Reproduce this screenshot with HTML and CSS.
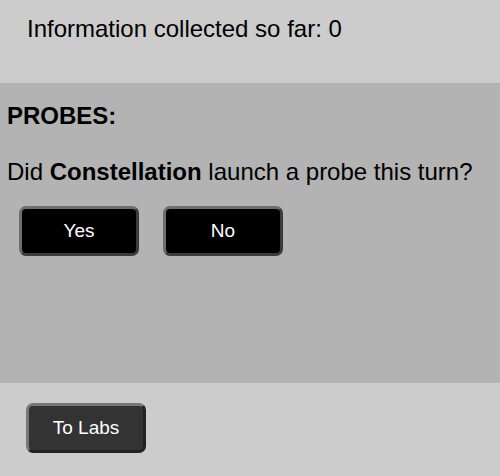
FILE: index.html
```html
<!DOCTYPE html>
<html>
<head>
<meta charset="utf-8">
<link rel="stylesheet" href="styles.css">
</head>
<body>
<div class="top">Information collected so far: 0</div>
<div class="probes">
  <div class="title">PROBES:</div>
  <div class="question">Did <b>Constellation</b> launch a probe this turn?</div>
  <div class="choices">
    <button class="btn black">Yes</button>
    <button class="btn black">No</button>
  </div>
</div>
<div class="bottom">
  <button class="btn dark">To Labs</button>
</div>
</body>
</html>
```
FILE: styles.css
```css
html, body {
  margin: 0;
  padding: 0;
  background: #cccccc;
  font-family: "Liberation Sans", Arial, sans-serif;
  color: #000;
}
.top {
  height: 83px;
  box-sizing: border-box;
  padding: 15px 27px 0;
  font-size: 24px;
  line-height: 28px;
  background: #cccccc;
}
.probes {
  height: 300px;
  box-sizing: border-box;
  background: #b3b3b3;
  padding: 19px 7px 0;
  font-size: 24px;
  line-height: 28px;
}
.title {
  font-weight: bold;
}
.question {
  margin-top: 28px;
}
.choices {
  display: flex;
  gap: 24px;
  margin-top: 20px;
  padding-left: 12px;
}
.btn {
  width: 120px;
  height: 50px;
  box-sizing: border-box;
  border-radius: 7px;
  border-style: solid;
  border-width: 3px;
  font-family: "Liberation Sans", Arial, sans-serif;
  font-size: 19px;
  color: #fff;
  padding: 0;
  margin: 0;
}
.black {
  background: #000;
  border-color: #6e6e6e #3c3c3c #3c3c3c #6e6e6e;
}
.dark {
  background: #333;
  border-color: #777 #222 #222 #777;
}
.bottom {
  height: 93px;
  box-sizing: border-box;
  padding: 20px 26px 0;
}
```
